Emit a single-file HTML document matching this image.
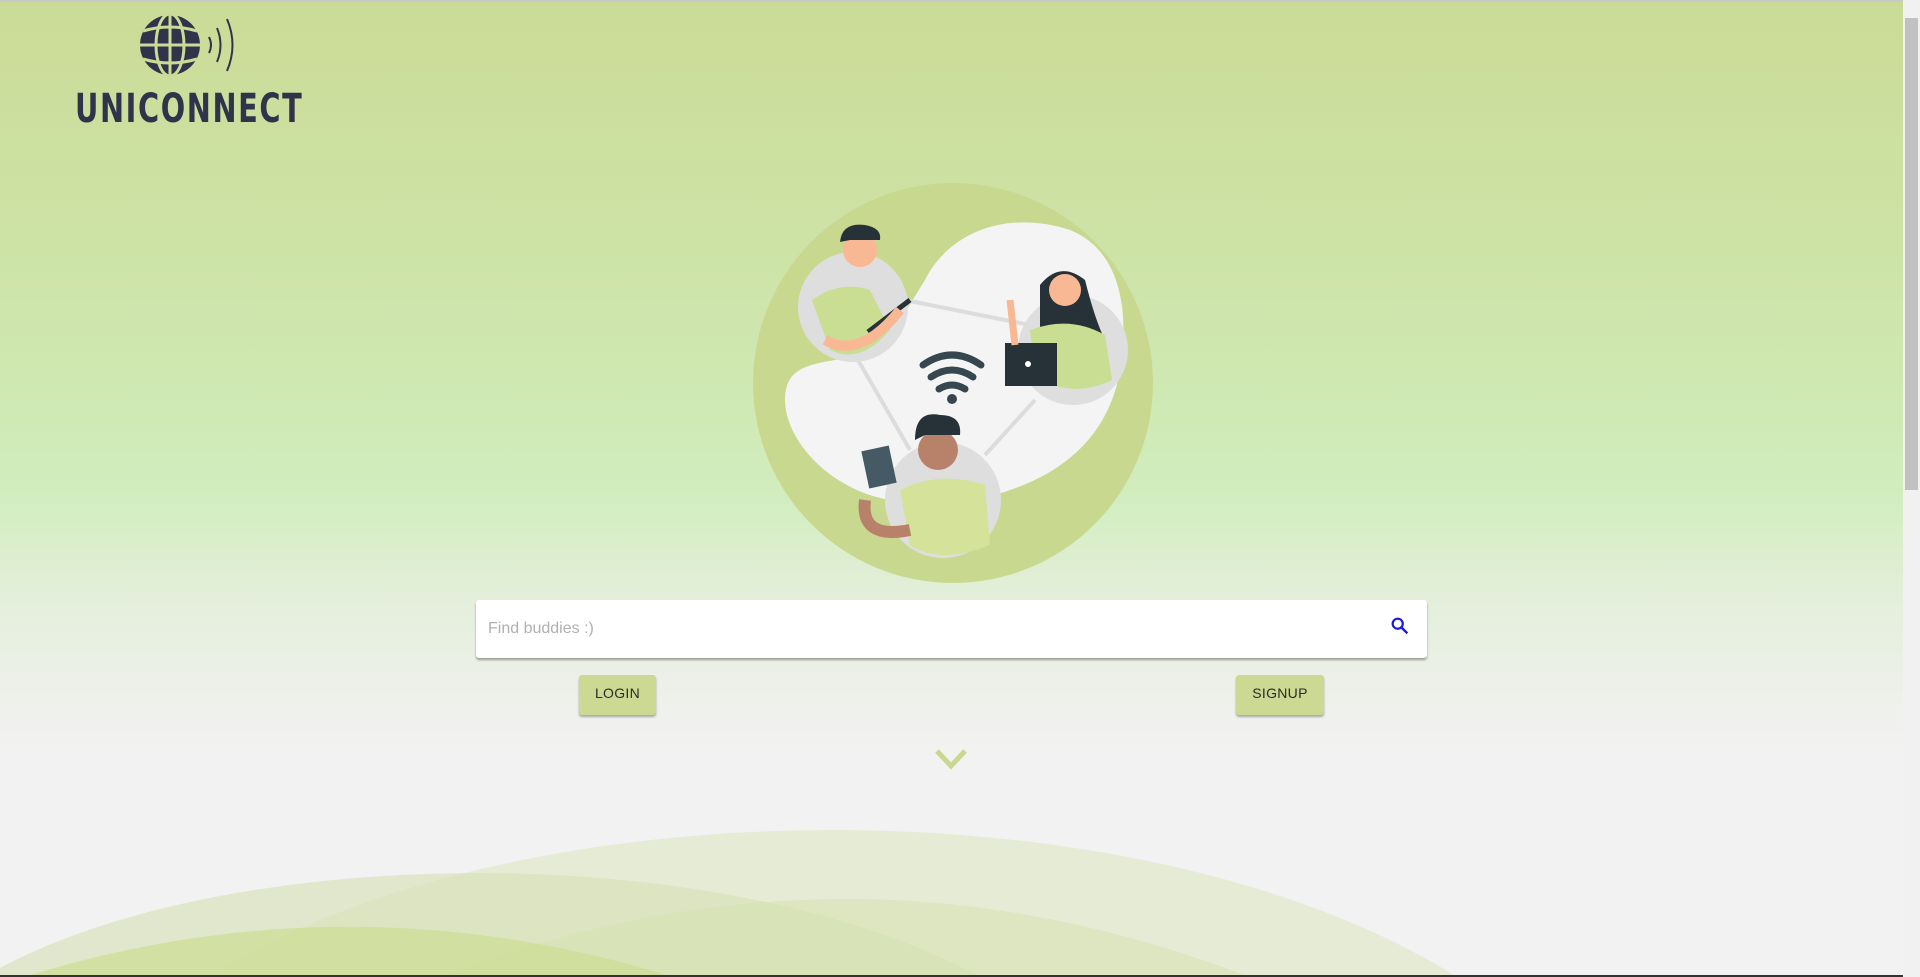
<!DOCTYPE html>
<html><head><meta charset="utf-8"><style>
html,body{margin:0;padding:0}
body{width:1920px;height:977px;overflow:hidden;position:relative;font-family:"Liberation Sans",sans-serif;
background:linear-gradient(180deg,#cbdb97 0px,#cde3a6 250px,#d1edbd 490px,#e4efdb 600px,#f0f1ee 720px,#f2f2f2 760px,#f2f2f2 977px);}
.top{position:absolute;left:0;top:0;width:1920px;height:2px;background:#c9c9c9}
.logo{position:absolute;left:75px;top:86px;font-family:"DejaVu Sans Condensed","Liberation Sans Narrow",sans-serif;font-weight:bold;font-size:40px;letter-spacing:2px;color:#30344a;transform:scaleX(0.8);transform-origin:left}
.search{position:absolute;left:476px;top:600px;width:951px;height:58px;background:#fff;border-radius:3px;box-shadow:0 2px 2px rgba(0,0,0,.35)}
.search span{position:absolute;left:12px;top:20px;font-size:16px;color:#b0b0b0}
.btn{position:absolute;top:675px;height:40px;background:#cbd992;border-radius:3px;box-shadow:0 2px 2px rgba(0,0,0,.3);font-size:14px;color:#2a2a2a;text-align:center;line-height:36px;letter-spacing:.3px}
.sb{position:absolute;right:0;top:0;width:17px;height:977px;background:#f1f1f1}
.thumb{position:absolute;right:2px;top:18px;width:13px;height:472px;background:#c1c1c1}
</style></head><body>
<div class="top"></div>
<svg style="position:absolute;left:0;top:0" width="1920" height="977">
 <g transform="translate(170,45)">
  <circle r="30" fill="#30344a"/>
  <g stroke="#cbdb97" stroke-width="3" fill="none">
   <line x1="0" y1="-31" x2="0" y2="31"/><line x1="-31" y1="0" x2="31" y2="0"/>
   <ellipse rx="14" ry="31"/>
   <path d="M-27,-14 Q0,-22 27,-14"/><path d="M-27,14 Q0,22 27,14"/>
  </g>
  <g stroke="#30344a" stroke-width="2" fill="none">
   <path d="M39,-8 Q43,0 39,8"/><path d="M47,-17 Q54,0 47,17"/><path d="M57,-26 Q68,0 57,26"/>
  </g>
 </g>
 <path d="M208,977 C520,781 1145,781 1457,977Z" fill="#e6ebd5"/>
 <path d="M0,968 C240,840 730,840 980,977 L0,977Z" fill="rgba(214,224,180,0.6)"/>
 <path d="M441,977 C710,873 980,873 1249,977Z" fill="rgba(214,226,175,0.55)"/>
 <path d="M24,977 C240,910 457,910 673,977Z" fill="rgba(205,221,150,0.75)"/>
 <g transform="translate(740,170)">
  <circle cx="213" cy="213" r="200" fill="#c9d88f"/>
  <path d="M95,190 C150,175 160,150 185,110 C210,60 270,40 330,60 C380,80 390,140 380,200 C370,260 330,300 270,320 C230,335 200,330 150,330 C90,320 45,270 45,230 C45,200 65,195 95,190Z" fill="#f4f4f4"/>
  <g stroke="#dcdcdc" stroke-width="4" fill="none">
   <line x1="165" y1="130" x2="290" y2="155"/><line x1="118" y1="190" x2="170" y2="280"/><line x1="245" y1="285" x2="295" y2="230"/>
  </g>
  <circle cx="113" cy="137" r="55" fill="#dedede"/>
  <circle cx="333" cy="180" r="55" fill="#dedede"/>
  <circle cx="203" cy="330" r="58" fill="#dedede"/>
  <path d="M72,130 Q100,110 130,120 L150,160 Q120,195 90,180 Z" fill="#c9dd93"/>
  <circle cx="120" cy="80" r="17" fill="#f8b893"/>
  <path d="M100,72 Q102,52 125,55 Q142,58 140,70 L110,70Z" fill="#263238"/>
  <path d="M128,162 L170,130" stroke="#263238" stroke-width="5"/>
  <path d="M85,170 Q120,190 160,140" stroke="#f8b893" stroke-width="10" fill="none"/>
  <path d="M300,115 Q320,90 345,110 Q355,150 365,170 L300,170Z" fill="#263238"/>
  <circle cx="325" cy="120" r="16" fill="#f8b893"/>
  <path d="M290,160 Q330,145 365,165 L372,210 Q330,230 295,205Z" fill="#c9dd93"/>
  <rect x="265" y="173" width="52" height="43" fill="#263238"/>
  <circle cx="288" cy="194" r="3" fill="#fff"/>
  <path d="M270,130 L275,175" stroke="#f8b893" stroke-width="7"/>
  <g stroke="#37474f" stroke-width="7" fill="none" stroke-linecap="round">
   <path d="M183,195 Q212,175 241,195"/><path d="M191,207 Q212,193 233,207"/><path d="M199,219 Q212,211 225,219"/>
  </g>
  <circle cx="212" cy="229" r="5" fill="#37474f"/>
  <path d="M160,320 Q200,300 245,315 L250,375 Q200,395 170,375Z" fill="#d4e29a"/>
  <circle cx="198" cy="280" r="20" fill="#b8826a"/>
  <path d="M175,270 Q175,240 200,245 Q222,245 220,265 L185,265Z" fill="#263238"/>
  <path d="M125,330 Q120,370 170,360" stroke="#b8826a" stroke-width="12" fill="none"/>
  <rect x="125" y="278" width="28" height="38" fill="#455a64" transform="rotate(-12 139 297)"/>
 </g>
 <path d="M937,751 L951,766 L965,751" stroke="#c9d88f" stroke-width="5" fill="none"/>
 <rect x="0" y="975" width="1920" height="2" fill="#333"/>
</svg>
<div class="logo">UNICONNECT</div>
<div class="search"><span>Find buddies :)</span>
 <svg style="position:absolute;right:16px;top:15px" width="22" height="22" viewBox="0 0 24 24"><circle cx="9.5" cy="9.5" r="5.5" stroke="#1a1adf" stroke-width="2.4" fill="none"/><path d="M13.5,13.5 L20,20" stroke="#1a1adf" stroke-width="2.6"/></svg>
</div>
<div class="btn" style="left:579px;width:77px">LOGIN</div>
<div class="btn" style="left:1236px;width:88px">SIGNUP</div>
<div class="sb"><div class="thumb"></div></div>
</body></html>
